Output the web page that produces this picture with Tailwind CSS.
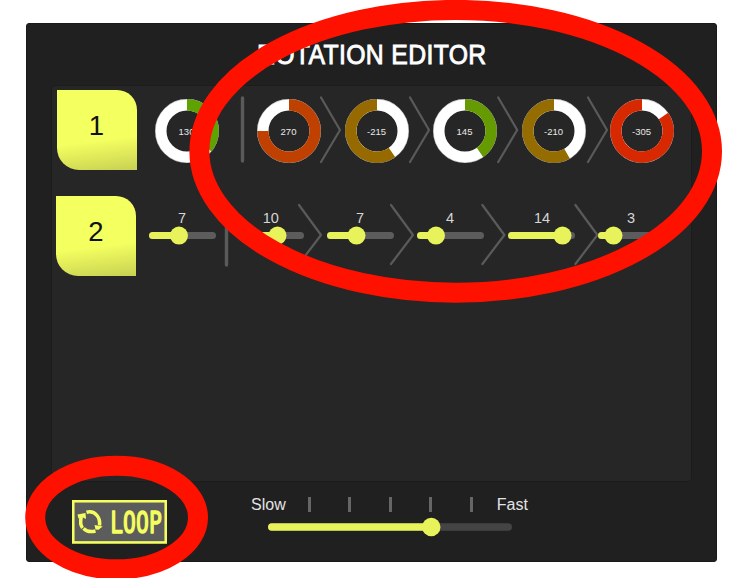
<!DOCTYPE html>
<html lang="en">
<head>
<meta charset="utf-8">
<title>Rotation Editor</title>
<script src="https://cdn.jsdelivr.net/npm/@tailwindcss/browser@4"></script>
</head>
<body class="bg-white w-[740px] h-[578px] overflow-hidden relative font-['Liberation_Sans',Arial,sans-serif]">
<main class="ml-[26px] mt-[22.5px] w-[691px] h-[539.5px] bg-[#202020] border border-[#191919] rounded-[3px] flex flex-col items-center float-left">
  <h1 class="h-[61px] pt-[12px]">
    <svg class="block" width="232" height="36"><text transform="translate(1 28) scale(.885 1)" textLength="259" font-size="28" fill="#fff" stroke="#fff" stroke-width=".9">ROTATION EDITOR</text></svg>
  </h1>
  <section class="w-[641px] h-[397px] shrink-0 bg-[#262626] border border-[#1c1c1c] rounded-[4px] pt-[4px] pl-[4.5px] flex flex-col gap-[26px]">
    <div id="angles" class="flex h-20 items-center"></div>
    <div id="speeds" class="flex h-20 items-center -ml-[0.5px]"></div>
  </section>
  <footer class="w-full flex pt-[18px] pl-[45px]">
    <button class="w-[95px] h-[44px] shrink-0" aria-label="Loop">
      <svg class="block w-full h-full" viewBox="0 0 95 44" fill="none">
        <rect x="1.250" y="1.250" width="92.500" height="41.200" fill="#5c5c5c" stroke="#f4ff5f" stroke-width="2.600"/>
        <g stroke="#f4ff5f" stroke-width="3.500" stroke-linejoin="round">
          <path d="M14.500 12.200Q21 10.500 25 15.500Q28.300 19.500 27.500 25.500"/>
          <path d="M9.300 17Q7.500 24 10.500 28"/>
          <path d="M11.500 28.500Q16 33 23.500 31"/>
        </g>
        <path d="M5.500 14.500L13.500 13L14 19L11 17.500L6.500 18.500Z M22.500 25L30.700 26.500L26.500 29.800L23.500 29.500Z" fill="#f4ff5f"/>
        <text transform="translate(0 33) scale(.7 1)" x="54.500 73 91.500 110" font-family="DejaVu Sans Mono, monospace" font-size="30.500" fill="#f4ff5f" stroke="#f4ff5f" stroke-width="1.500" stroke-linejoin="round">LOOP</text>
      </svg>
    </button>
    <div class="ml-[84px] flex flex-col">
      <div class="flex items-center text-[16px] leading-[20px] text-[#e3e3e3] -mt-[5px]">
        <span class="w-[57px]">Slow</span>
        <span class="flex gap-[37.7px]">
          <i class="w-[2.8px] h-[15px] bg-[#666]"></i><i class="w-[2.8px] h-[15px] bg-[#666]"></i><i class="w-[2.8px] h-[15px] bg-[#666]"></i><i class="w-[2.8px] h-[15px] bg-[#666]"></i><i class="w-[2.8px] h-[15px] bg-[#666]"></i>
        </span>
        <span class="ml-[24px]">Fast</span>
      </div>
      <svg class="ml-[17px] mt-[2.500px] w-[244px] h-[20px]" viewBox="0 0 244 20">
        <rect y="6.200" width="244" height="7.600" rx="3.800" fill="#444"/>
        <rect y="6.200" width="170" height="7.600" rx="3.800" fill="#e8f25a"/>
        <circle cx="163.300" cy="10" r="9.200" fill="#e8f25a"/>
      </svg>
    </div>
  </footer>
</main>
<svg class="absolute left-0 top-0" width="740" height="578" fill="none" stroke="#ff1100" stroke-width="20">
  <ellipse cx="455.700" cy="151.300" rx="256.300" ry="141.400"/>
  <ellipse cx="116.600" cy="517.500" rx="81.400" ry="51.800"/>
</svg>
<script>
const tile = n => `<div class="w-20 h-20 shrink-0 rounded-tr-[20px] rounded-bl-[22px] bg-[linear-gradient(173deg,#f4ff60_62%,#c8d152_100%)] text-[27.5px] leading-[72px] text-center text-[#111]">${n}</div>`;
const bar = h => `<svg class="shrink-0 overflow-visible" width="3" height="80"><path d="M1.500 ${h[0]}V${h[1]}" stroke="#5a5a5a" stroke-width="3.400" stroke-linecap="round"/></svg>`;
const donut = (v, c) => {
  const a = Math.abs(v) * Math.PI / 180, s = v < 0 ? -1 : 1;
  const x = 32 + s * 26.2 * Math.sin(a), y = 32 - 26.2 * Math.cos(a);
  return `<svg class="block shrink-0" width="64" height="64" viewBox="0 0 64 64" fill="none">
    <circle cx="32" cy="32" r="26.200" stroke="#fff" stroke-width="11.400"/>
    <path d="M32 5.800A26.200 26.200 0 ${a > Math.PI ? 1 : 0} ${s > 0 ? 1 : 0} ${x} ${y}" stroke="${c}" stroke-width="11.400"/>
    <circle cx="32" cy="32" r="31.800" stroke="#777" stroke-opacity=".5" stroke-width=".7"/>
    <text x="31.500" y="36.200" text-anchor="middle" font-size="9.500" fill="#e8e8e8">${v}</text></svg>`;
};
const chevron = (w, d) => `<svg class="shrink-0 overflow-visible" width="${w}" height="80" fill="none"><path d="${d}" stroke="#5a5a5a" stroke-width="2.200" stroke-linecap="round" stroke-linejoin="round"/></svg>`;
const slider = (v, k, tx) => `<svg class="shrink-0 overflow-visible" width="67" height="80">
    <rect y="36" width="67" height="7" rx="3.500" fill="#5c5c5c"/>
    <rect y="36" width="${k}" height="7" rx="3.500" fill="#e8f25a"/>
    <circle cx="${k}" cy="39.600" r="9" fill="#e8f25a"/>
    <text x="${tx}" y="27" text-anchor="middle" font-size="14.500" fill="#d6d6d6">${v}</text></svg>`;
const gap = w => `<span class="shrink-0" style="width:${w}px"></span>`;

const c1 = [0, 1, 1.2, 2].map(o => chevron(24.35, `M${o} 7.500L${o + 19} 40L${o} 72`));
document.getElementById('angles').innerHTML = tile(1) + gap(18.4) +
  `<div class="mt-[2px]">${donut(130, '#5fa300')}</div>` + gap(22.3) + bar([8, 71]) + gap(12.4) +
  [[270, '#c04000'], [-215, '#976a00'], [145, '#659a00'], [-210, '#956c00'], [-305, '#d82800']]
    .map((d, i) => `<div class="mt-[2px]">${donut(d[0], d[1])}</div>` + (c1[i] || '')).join('');

const c2 = [-5, -3, -1.6, .4].map(o => chevron(23.3, `M${o} 9L${o + 22} 39L${o} 68`));
document.getElementById('speeds').innerHTML = tile(2) + gap(13) + slider(7, 30, 33) + gap(9.2) + bar([9, 69]) + gap(8.5) +
  [[10, 40.5, 33.7], [7, 29.5, 33], [4, 19, 33], [14, 54.5, 34], [3, 15.5, 33]]
    .map((d, i) => slider(d[0], d[1], d[2]) + (c2[i] || '')).join('');
</script>
</body>
</html>
